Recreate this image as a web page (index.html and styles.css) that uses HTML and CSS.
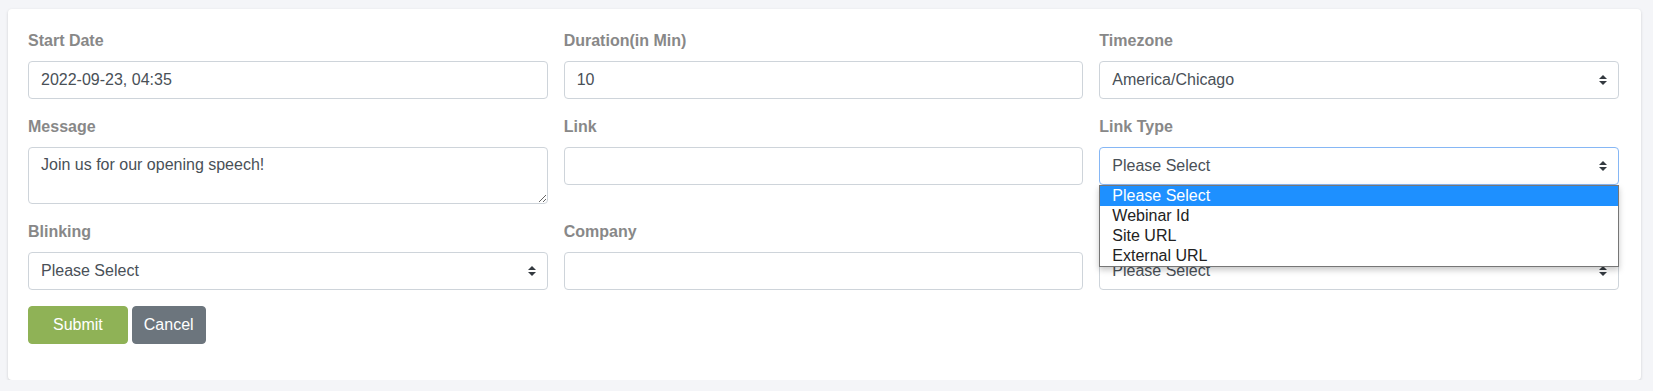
FILE: index.html
```html
<!DOCTYPE html>
<html lang="en">
<head>
  <meta charset="UTF-8">
  <meta name="viewport" content="width=device-width, initial-scale=1.0">
  <title>Edit Announcement</title>
  <link rel="stylesheet" href="styles.css">
</head>
<body>
  <div class="card">
    <form class="form-grid">
      <!-- Row 1 -->
      <div class="form-group">
        <label for="startDate">Start Date</label>
        <input type="text" id="startDate" class="form-control" value="2022-09-23, 04:35">
      </div>
      <div class="form-group">
        <label for="duration">Duration(in Min)</label>
        <input type="text" id="duration" class="form-control" value="10">
      </div>
      <div class="form-group">
        <label for="timezone">Timezone</label>
        <div class="select-wrap">
          <select id="timezone" class="form-control">
            <option>America/Chicago</option>
          </select>
          <svg class="select-arrow" viewBox="0 0 4 5" width="8" height="10"><path d="M2 0L0 2h4zm0 5L0 3h4z"/></svg>
        </div>
      </div>

      <!-- Row 2 -->
      <div class="form-group">
        <label for="message">Message</label>
        <textarea id="message" class="form-control message">Join us for our opening speech!</textarea>
      </div>
      <div class="form-group">
        <label for="link">Link</label>
        <input type="text" id="link" class="form-control">
      </div>
      <div class="form-group">
        <label for="linkType">Link Type</label>
        <div class="select-wrap">
          <select id="linkType" class="form-control is-open">
            <option>Please Select</option>
          </select>
          <svg class="select-arrow" viewBox="0 0 4 5" width="8" height="10"><path d="M2 0L0 2h4zm0 5L0 3h4z"/></svg>
          <!-- open listbox -->
          <ul class="listbox">
            <li class="selected">Please Select</li>
            <li>Webinar Id</li>
            <li>Site URL</li>
            <li>External URL</li>
          </ul>
        </div>
      </div>

      <!-- Row 3 -->
      <div class="form-group">
        <label for="blinking">Blinking</label>
        <div class="select-wrap">
          <select id="blinking" class="form-control">
            <option>Please Select</option>
          </select>
          <svg class="select-arrow" viewBox="0 0 4 5" width="8" height="10"><path d="M2 0L0 2h4zm0 5L0 3h4z"/></svg>
        </div>
      </div>
      <div class="form-group">
        <label for="company">Company</label>
        <input type="text" id="company" class="form-control">
      </div>
      <div class="form-group">
        <!-- label sits under the open list -->
        <label for="status">&nbsp;</label>
        <div class="select-wrap">
          <select id="status" class="form-control">
            <option>Please Select</option>
          </select>
          <svg class="select-arrow" viewBox="0 0 4 5" width="8" height="10"><path d="M2 0L0 2h4zm0 5L0 3h4z"/></svg>
        </div>
      </div>

      <!-- Buttons -->
      <div class="actions">
        <button type="submit" class="btn btn-submit">Submit</button>
        <button type="button" class="btn btn-cancel">Cancel</button>
      </div>
    </form>
  </div>
</body>
</html>
```

FILE: styles.css
```css
/* General */
* {
  box-sizing: border-box;
}

body {
  margin: 0;
  padding: 9px 12px 0 8px;
  background-color: #f4f5f8;
  font-family: "Liberation Sans", Arial, sans-serif;
  font-size: 16px;
  color: #495057;
}

.card {
  background-color: #fff;
  border-radius: 4px;
  box-shadow: 0 1px 3px rgba(0, 0, 0, 0.16);
  padding: 20px 22px 20px 20px;
}

/* Form layout */
.form-grid {
  display: grid;
  grid-template-columns: repeat(3, 1fr);
  column-gap: 16px;
  margin: 0;
}

.form-group {
  margin-bottom: 16px;
}

label {
  display: block;
  font-size: 16px;
  font-weight: bold;
  line-height: 24px;
  color: #888888;
  margin-bottom: 8px;
}

.form-control {
  display: block;
  width: 100%;
  height: 38px;
  padding: 6px 12px;
  font-family: inherit;
  font-size: 16px;
  line-height: 24px;
  color: #495057;
  background-color: #fff;
  border: 1px solid #ced4da;
  border-radius: 4px;
  margin: 0;
}

.form-control:focus {
  outline: none;
}

textarea.message {
  height: 57px;
  padding-top: 5px;
  resize: both;
}

/* Selects */
.select-wrap {
  position: relative;
}

.select-wrap select {
  appearance: none;
  -webkit-appearance: none;
  padding-right: 28px;
}

.select-wrap select.is-open {
  border-color: #86b7f5; /* focused */
}

.select-arrow {
  position: absolute;
  right: 12px;
  top: 50%;
  transform: translateY(-50%);
  fill: #343a40;
  pointer-events: none;
}

/* Opened dropdown list */
.listbox {
  position: absolute;
  top: 100%;
  left: 0;
  right: 0;
  z-index: 10;
  list-style: none;
  margin: 0;
  padding: 0;
  background-color: #fff;
  border: 1px solid #767676;
  box-shadow: 0 3px 6px rgba(0, 0, 0, 0.22);
}

.listbox li {
  padding: 0 12px;
  line-height: 20px;
  height: 20px;
  font-size: 16px;
  color: #222;
}

.listbox li.selected {
  background-color: #1e90ff;
  color: #fff;
}

/* Buttons */
.actions {
  grid-column: 1 / -1;
  display: flex;
  gap: 4px;
  margin-bottom: 16px;
}

.btn {
  height: 38px;
  padding: 6px 11px;
  font-family: inherit;
  font-size: 16px;
  line-height: 24px;
  color: #fff;
  border: 1px solid transparent;
  border-radius: 4px;
  cursor: pointer;
}

.btn-submit {
  background-color: #8fb256;
  border-color: #8fb256;
  padding: 6px 24px;
}

.btn-cancel {
  background-color: #6c757d;
  border-color: #6c757d;
}
```
